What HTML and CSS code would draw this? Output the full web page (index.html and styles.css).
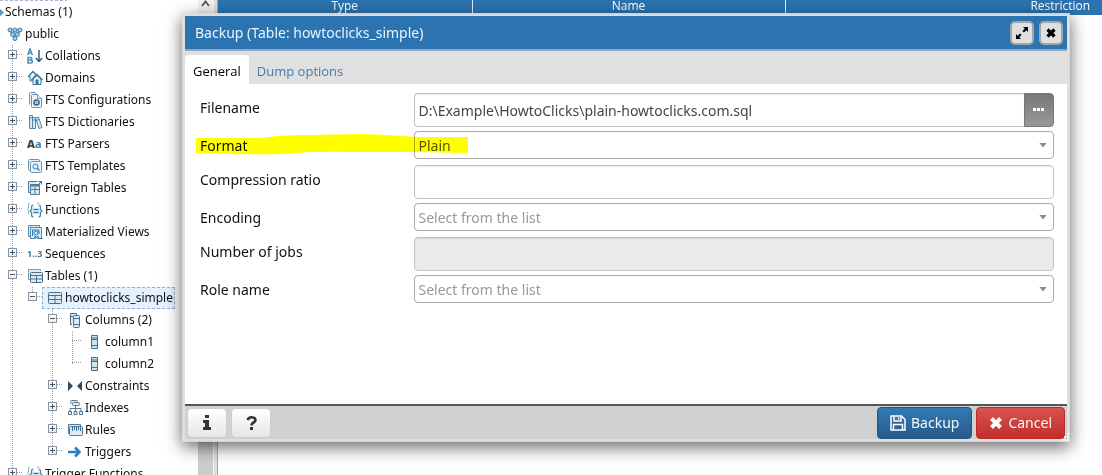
FILE: index.html
```html
<!DOCTYPE html>
<html lang="en">
<head>
<meta charset="utf-8">
<title>Backup (Table: howtoclicks_simple)</title>
<link rel="stylesheet" href="styles.css">
</head>
<body>
<svg class="sprite" aria-hidden="true">
  <symbol id="public" viewBox="0 0 16 16"><g fill="#a9d3ec" stroke="#3f7ca6" stroke-width="1"><path d="M3 5 8 12 13 5M5 3 8 6 11 3"/><circle cx="3" cy="4" r="2"/><circle cx="8" cy="4" r="2"/><circle cx="13" cy="4" r="2"/><circle cx="5.500" cy="8.500" r="2"/><circle cx="10.500" cy="8.500" r="2"/><circle cx="8" cy="12.500" r="2"/></g></symbol>
  <symbol id="collation" viewBox="0 0 16 16"><g fill="none" stroke="#4a8dbd" stroke-width="1.500"><path d="M.7 7 3 .8 5.300 7M1.500 5H4.500M1 9.500V15H3.500C6 15 6 12 3.500 12H1 3.200C5.500 12 5.300 9.500 3.200 9.500Z"/></g><path d="M12 2V13.500M8.800 10 12 13.500 15.200 10" fill="none" stroke="#34566f" stroke-width="1.400"/></symbol>
  <symbol id="domain" viewBox="0 0 16 16"><g fill="#e6f3fb" stroke="#3e7499"><path d="M3 6V11H8V5"/><path d="M1 7 6 1.500 11 6.500" fill="none" stroke-width="1.500"/><path d="M6 9V14.500H14V9L10 5.500Z"/><path d="M4.500 10 10 4.500 15.500 10" fill="none" stroke-width="1.500"/></g><path d="M8.500 9.500H11.500V14.500H8.500Z" fill="#2d79ae"/></symbol>
  <symbol id="config" viewBox="0 0 16 16"><g fill="#e8f3fa" stroke="#6e93ac"><path d="M2.500 12.500V1.500Q2.500.5 3.500.5H8L11 3.500"/><path d="M4.500 3.500Q4.500 2.500 5.500 2.500H10.500L14.500 6.500V14.500Q14.500 15.500 13.500 15.500H5.500Q4.500 15.500 4.500 14.500Z"/><path d="M10.500 2.500V6.500H14.500"/><circle cx="9.500" cy="10.500" r="2.500" stroke="#35607d" stroke-width="1.500"/><circle cx="9.500" cy="10.500" r=".7"/></g></symbol>
  <symbol id="dictionary" viewBox="0 0 16 16"><g fill="#d5eaf7" stroke="#5487a8"><path d="M2.500 1.500H5.500V14.500H2.500ZM5.500 3.500H8.500V14.500H5.500ZM8.500 4 11.500 3 15 13.500 12 14.500ZM2.500 4H5.500M5.500 6H8.500M9.200 6.500 12.200 5.500"/></g></symbol>
  <symbol id="template" viewBox="0 0 16 16"><g fill="#e8f3fa" stroke="#6e93ac"><path d="M3.500 12.500H2.500Q1.500 12.500 1.500 11.500V2.500Q1.500 1.500 2.500 1.500H11.500Q12.500 1.500 12.500 3"/><rect x="3.500" y="3.500" width="11" height="11" rx="1"/><circle cx="8.500" cy="8.500" r="2.500" stroke="#357eae"/><path d="M10.300 10.300 12.500 12.500" stroke="#357eae" stroke-width="1.500"/></g></symbol>
  <symbol id="foreign" viewBox="0 0 16 16"><g fill="#d7eaf6" stroke="#517d9b"><path d="M3 12.500H1.500V1.500H10M3.500 4.500H12.500V14.500H3.500Z"/><path d="M3.500 9.500H12.500M8 7V14.500"/><path d="M4 5.500H12" stroke-width="2"/><path d="M10.500 5.500 14 2M11.500 1.500H14.500V4.500" fill="none" stroke="#286a98"/></g></symbol>
  <symbol id="function" viewBox="0 0 16 16"><g fill="none" stroke="#4c87ad"><path d="M3 1Q1.500 1 1.500 3V6L.5 7.500 1.500 9V12M10 1Q12 1 12 2" stroke="#8cafc6"/><path d="M6.500 3Q4.500 3 4.500 5V7.500L3 9 4.500 10.500V13Q4.500 15 6.500 15M11.500 3Q13.500 3 13.500 5V7.500L15 9 13.500 10.500V13Q13.500 15 11.500 15" fill="#d8edf9" stroke-width="1.200"/><path d="M6.500 7.500H11.500M6.500 10.500H11.500" stroke="#287cb6" stroke-width="1.300"/></g></symbol>
  <symbol id="matview" viewBox="0 0 16 16"><g fill="#d8edf9" stroke="#578aac"><path d="M3 12.500H1.500V1.500H12.500V3"/><rect x="3.500" y="3.500" width="11" height="11"/><path d="M5.500 12V6H12V10" fill="none" stroke="#2d79ae"/><circle cx="9" cy="9" r="2" stroke="#2d79ae"/><path d="M8 15V12L9.500 13.500 11 12V15M12.500 14.500H15.500" stroke="#285f85"/></g></symbol>
  <symbol id="tables" viewBox="0 0 16 16"><g fill="#dcebf5" stroke="#486f89"><path d="M3 11.500H1.500V1.500H13.500V3" stroke="#7d9caf"/><rect x="3.500" y="4.500" width="12" height="10" rx="1"/><path d="M3.500 7.500H15.500M3.500 11H15.500M9.500 7.500V14.500"/></g></symbol>
  <symbol id="table" viewBox="0 0 16 16"><g fill="#dcebf5" stroke="#486f89"><rect x="1.500" y="2.500" width="13" height="11" rx="1"/><path d="M1.500 5.500H14.500M1.500 9.500H14.500M8 5.500V13.500"/></g></symbol>
  <symbol id="columns" viewBox="0 0 16 16"><g fill="#dcebf5" stroke="#486f89"><path d="M5 12.500H3.500V1.500H9.500V3M3.500 4.500H6"/><rect x="6.500" y="3.500" width="6" height="12" rx="1"/><path d="M6.500 6.500H12.500M6.500 12.500H12.500"/></g></symbol>
  <symbol id="column" viewBox="0 0 16 16"><g fill="#cfe4f2" stroke="#486f89"><path d="M4.500 1.500H10.500V14.500H4.500Z"/><path d="M4.500 5.500H10.500M4.500 11.500H10.500M5 4H10"/></g></symbol>
  <symbol id="constraint" viewBox="0 0 16 16"><path d="M1 3 6 8 1 13ZM15 3 10 8 15 13Z" fill="#34495a"/></symbol>
  <symbol id="index" viewBox="0 0 16 16"><g fill="#dcebf5" stroke="#587991"><rect x="3.500" y=".5" width="7" height="3" rx="1"/><rect x="5.500" y="2.500" width="7" height="3" rx="1"/><path d="M8.500 5.500V11M3 11V8.500H14V11" fill="none"/><path d="M1.500 11.500H4.500V14.500H1.500ZM7 11.500H10V14.500H7ZM12.500 11.500H15.500V14.500H12.500Z"/></g></symbol>
  <symbol id="rule" viewBox="0 0 16 16"><g fill="#dcecf7" stroke="#587991"><path d="M2.500 11.500H1.500V2.500H13.500V4"/><rect x="2.500" y="4.500" width="13" height="9" rx="1"/><path d="M5.500 5V9M7.500 5V8M9.500 5V9M11.500 5V8M13.500 5V9" stroke="#2f75a5"/></g></symbol>
  <symbol id="trigger" viewBox="0 0 16 16"><path d="M1 8H12M8 3.500 12.500 8 8 12.500" fill="none" stroke="#2c80bd" stroke-width="2.500"/></symbol>
</svg>

<main class="app">
  <nav class="tree" aria-label="Browser">
    <ul class="root">
      <li><div class="row schemas"><span class="diamond"></span>Schemas (1)</div></li>
      <li>
        <div class="row"><svg class="icon lead"><use href="#public"/></svg>public</div>
        <ul class="branch">
          <li><div class="row"><button class="toggle" aria-label="Expand"></button><svg class="icon"><use href="#collation"/></svg>Collations</div></li>
          <li><div class="row"><button class="toggle" aria-label="Expand"></button><svg class="icon"><use href="#domain"/></svg>Domains</div></li>
          <li><div class="row"><button class="toggle" aria-label="Expand"></button><svg class="icon"><use href="#config"/></svg>FTS Configurations</div></li>
          <li><div class="row"><button class="toggle" aria-label="Expand"></button><svg class="icon"><use href="#dictionary"/></svg>FTS Dictionaries</div></li>
          <li><div class="row"><button class="toggle" aria-label="Expand"></button><span class="icon glyph"><b>A</b>a</span>FTS Parsers</div></li>
          <li><div class="row"><button class="toggle" aria-label="Expand"></button><svg class="icon"><use href="#template"/></svg>FTS Templates</div></li>
          <li><div class="row"><button class="toggle" aria-label="Expand"></button><svg class="icon"><use href="#foreign"/></svg>Foreign Tables</div></li>
          <li><div class="row"><button class="toggle" aria-label="Expand"></button><svg class="icon"><use href="#function"/></svg>Functions</div></li>
          <li><div class="row"><button class="toggle" aria-label="Expand"></button><svg class="icon"><use href="#matview"/></svg>Materialized Views</div></li>
          <li><div class="row"><button class="toggle" aria-label="Expand"></button><span class="icon glyph digits">1..3</span>Sequences</div></li>
          <li>
            <div class="row"><button class="toggle open" aria-label="Collapse"></button><svg class="icon"><use href="#tables"/></svg>Tables (1)</div>
            <ul class="branch">
              <li>
                <div class="row"><button class="toggle open" aria-label="Collapse"></button><span class="selected"><svg class="icon"><use href="#table"/></svg>howtoclicks_simple</span></div>
                <ul class="branch">
                  <li>
                    <div class="row"><button class="toggle open" aria-label="Collapse"></button><svg class="icon"><use href="#columns"/></svg>Columns (2)</div>
                    <ul class="branch">
                      <li><div class="row"><span class="leaf"></span><svg class="icon"><use href="#column"/></svg>column1</div></li>
                      <li><div class="row"><span class="leaf"></span><svg class="icon"><use href="#column"/></svg>column2</div></li>
                    </ul>
                  </li>
                  <li><div class="row"><button class="toggle" aria-label="Expand"></button><svg class="icon"><use href="#constraint"/></svg>Constraints</div></li>
                  <li><div class="row"><button class="toggle" aria-label="Expand"></button><svg class="icon"><use href="#index"/></svg>Indexes</div></li>
                  <li><div class="row"><button class="toggle" aria-label="Expand"></button><svg class="icon"><use href="#rule"/></svg>Rules</div></li>
                  <li><div class="row"><button class="toggle" aria-label="Expand"></button><svg class="icon"><use href="#trigger"/></svg>Triggers</div></li>
                </ul>
              </li>
            </ul>
          </li>
          <li><div class="row"><button class="toggle" aria-label="Expand"></button><svg class="icon"><use href="#function"/></svg>Trigger Functions</div></li>
        </ul>
      </li>
    </ul>
  </nav>
  <div class="scrollbar"><svg class="scroll-up" viewBox="0 0 15 13"><path d="M4 6 7.500 1.500 11 6" fill="none" stroke="#555" stroke-width="1.800"/></svg></div>
  <div class="splitter"></div>
  <section class="content">
    <table class="grid">
      <thead><tr><th class="col-type">Type</th><th class="col-name">Name</th><th class="col-restriction">Restriction</th></tr></thead>
    </table>
  </section>
</main>

<div class="dialog" role="dialog" aria-labelledby="dialog-title">
  <header class="titlebar">
    <h1 class="title" id="dialog-title">Backup (Table: howtoclicks_simple)</h1>
    <button class="window-button" aria-label="Maximize"><svg width="14" height="14" viewBox="0 0 14 14"><path d="M8 1H13V6L11.300 4.300 9 6.600 7.400 5 9.700 2.700ZM6 13H1V8L2.700 9.700 5 7.400 6.600 9 4.300 11.300Z"/></svg></button>
    <button class="window-button" aria-label="Close"><svg width="12" height="12" viewBox="0 0 12 12"><path d="M2.500 2.500 9.500 9.500M9.500 2.500 2.500 9.500" stroke="#000" stroke-width="3.200"/></svg></button>
  </header>
  <div class="tabs" role="tablist">
    <button class="tab active" role="tab" aria-selected="true">General</button>
    <button class="tab" role="tab" aria-selected="false">Dump options</button>
  </div>
  <form class="form" id="backup">
    <label class="label" for="filename">Filename</label>
    <div class="file"><input class="field" id="filename" type="text" value="D:\Example\HowtoClicks\plain-howtoclicks.com.sql"><button class="browse" type="button" aria-label="Browse"><svg width="12" height="4" viewBox="0 0 12 4"><path d="M0 0H3V3H0ZM4 0H7V3H4ZM8 0H11V3H8Z" fill="#fff"/></svg></button></div>
    <label class="label short" for="format">Format</label>
    <div class="picker"><select class="field chosen" id="format"><option>Plain</option></select></div>
    <label class="label" for="ratio">Compression ratio</label>
    <input class="field" id="ratio" type="text">
    <label class="label short" for="encoding">Encoding</label>
    <div class="picker"><select class="field" id="encoding"><option>Select from the list</option></select></div>
    <label class="label" for="jobs">Number of jobs</label>
    <input class="field" id="jobs" type="text" disabled>
    <label class="label short" for="role">Role name</label>
    <div class="picker"><select class="field" id="role"><option>Select from the list</option></select></div>
    <svg class="marker" viewBox="0 0 272 22" aria-hidden="true"><path d="M0 4 64 4Q85 1 110 1L165 0Q195 1 220 3L272 3V19L218 18 160 18Q110 17 90 20 50 21 0 19Z" fill="#ff0"/></svg>
  </form>
  <footer class="footer">
    <button class="small" aria-label="Information"><svg width="8" height="15" viewBox="0 0 8 15"><path d="M2 0H6V3H2ZM0 5H6V12H8V15H0V12H2V8H0Z" fill="#333"/></svg></button>
    <button class="small" aria-label="Help"><svg width="11" height="14" viewBox="0 0 11 14"><path d="M1.500 4Q2.500 1.300 5.500 1.300C10 1.300 10.500 5 7.500 6.500Q5.500 7.500 5.500 9.500" fill="none" stroke="#333" stroke-width="2.600"/><path d="M4 11H7V14H4Z" fill="#333"/></svg></button>
    <button class="action primary" type="submit" form="backup"><svg width="16" height="16" viewBox="0 0 16 16"><path d="M1 1H11.500L15 4.500V15H1ZM4 1V6H11V1M8.500 2.500V4.500M3.500 15V9.500H12.500V15" fill="none" stroke="#fff" stroke-width="1.500"/></svg>Backup</button>
    <button class="action danger" type="button"><svg width="14" height="14" viewBox="0 0 14 14"><path d="M2.500 2.500 11.500 11.500M11.500 2.500 2.500 11.500" stroke="#fff" stroke-width="4"/></svg>Cancel</button>
  </footer>
  <svg class="grip" viewBox="0 0 8 8" aria-hidden="true"><path d="M6 0H8V2H6ZM3 3H5V5H3ZM6 3H8V5H6ZM0 6H2V8H0ZM3 6H5V8H3ZM6 6H8V8H6Z" fill="#f5f5f5"/></svg>
</div>
</body>
</html>
```

FILE: styles.css
```css
* { box-sizing: border-box; }
body {
  margin: 0;
  height: 100vh;
  overflow: hidden;
  background: #fff;
  color: #111;
  font: 12px/22px "Noto Sans", "Open Sans", sans-serif;
}
button, input, select { font: inherit; color: inherit; margin: 0; }
ul { list-style: none; margin: 0; padding: 0; }
.sprite { display: none; }

.app { display: flex; height: 100%; overflow: hidden; }
.tree { width: 198px; flex: none; overflow: hidden; white-space: nowrap; }
.root {
  padding: 1px 0 0 2px;
  background: repeating-linear-gradient(90deg, #a3b6cf 0 3px, transparent 3px 5px) 0 0 / 67px 1px no-repeat;
}
.row { display: flex; align-items: center; height: 22px; }
.schemas { padding-left: 3px; }
.diamond { width: 5px; height: 5px; margin: 0 2px 0 -7px; background: #5a9ccc; transform: rotate(45deg); }
.icon { width: 16px; height: 16px; margin: 0 2px 0 5px; flex: none; }
.glyph { font: bold 11px/16px "Open Sans", sans-serif; color: #3b7ba8; }
.glyph b { color: #34495a; }
.digits { font-size: 9px; }
.branch > li {
  background: repeating-linear-gradient(#999 0 1px, transparent 1px 2px) 10px 0 / 1px 100% no-repeat;
}
.branch > li:last-child { background-size: 1px 11px; }
.root > li > .branch > li:last-child { background-size: 1px 100%; }
.branch .branch { margin-left: 20px; }
.toggle, .leaf { width: 20px; height: 20px; flex: none; padding: 0; border: 0; }
.toggle {
  background:
    linear-gradient(#456, #456) 8px 8px / 5px 1px no-repeat,
    linear-gradient(#456, #456) 10px 6px / 1px 5px no-repeat,
    linear-gradient(#fff, #eee) 7px 5px / 7px 7px no-repeat,
    linear-gradient(#8a94a0, #8a94a0) 6px 4px / 9px 9px no-repeat,
    repeating-linear-gradient(90deg, #999 0 1px, transparent 1px 2px) 15px 8px / 5px 1px no-repeat;
}
.toggle.open {
  background:
    linear-gradient(#456, #456) 8px 8px / 5px 1px no-repeat,
    linear-gradient(#fff, #eee) 7px 5px / 7px 7px no-repeat,
    linear-gradient(#8a94a0, #8a94a0) 6px 4px / 9px 9px no-repeat,
    repeating-linear-gradient(90deg, #999 0 1px, transparent 1px 2px) 15px 8px / 5px 1px no-repeat;
}
.leaf { background: repeating-linear-gradient(90deg, #999 0 1px, transparent 1px 2px) 10px 8px / 10px 1px no-repeat; }
.selected { display: flex; align-items: center; height: 22px; padding-right: 2px; background: #e5f1fc; outline: 1px dashed #92b1cf; outline-offset: -1px; }

.scrollbar { width: 15px; flex: none; background: linear-gradient(#f0f0f0 0 13px, #cdcdcd 13px); }
.scroll-up { display: block; width: 15px; height: 13px; }
.splitter { width: 5px; flex: none; background: #ddd; border-left: 1px solid #f4f4f4; border-right: 1px solid #aaa; }
.content { flex: 1; min-width: 0; overflow: hidden; }
.grid { width: 1118px; table-layout: fixed; border-collapse: collapse; background: #2b74b1; color: #fff; font-family: "Open Sans", sans-serif; }
.grid th { height: 15px; padding: 0 0 3px; border-right: 1px solid #e4eef6; font-weight: 400; line-height: 12px; }
.col-type { width: 254px; }
.col-name { width: 313px; }

.dialog {
  position: absolute;
  inset: 13px 32px 33px 182px;
  display: flex;
  flex-direction: column;
  border: 3px solid rgba(221, 221, 221, .92);
  background: #fff;
  background-clip: padding-box;
  box-shadow: 0 5px 16px rgba(0, 0, 0, .6);
  font-size: 14px;
}
.titlebar { display: flex; align-items: center; gap: 5px; height: 35px; flex: none; padding: 0 4px 0 10px; background: #2b74b1; border-bottom: 2px solid #91a9bb; }
.title { flex: 1; margin: 0; color: #e9f3fb; font-size: 14px; font-weight: 400; }
.window-button { display: grid; place-items: center; width: 24px; height: 24px; padding: 0; background: #e0e0e0; border: 2px solid #a0a6aa; border-radius: 5px; }
.tabs { display: flex; height: 33px; flex: none; padding-top: 4px; background: #e0e0e0; font-family: "Open Sans", sans-serif; font-size: 13px; }
.tab { padding: 2px 8px 0; border: 0; background: none; color: #447cae; }
.tab.active { background: #fff; color: #000; border-radius: 4px 4px 0 0; }

.form { position: relative; flex: 1; display: grid; grid-template-columns: 1fr 3fr; grid-auto-rows: max-content; padding: 9px 13px 0 15px; }
.label { height: 38px; line-height: 30px; }
.label.short { height: 34px; line-height: 30px; }
.field { display: block; width: 100%; height: 34px; padding: 0 4px; border: 1px solid #c4c4c4; border-radius: 4px; background: #fff; color: #444; box-shadow: inset 0 1px 1px rgba(0, 0, 0, .08); }
.field:disabled { background: #ebebeb; }
.file { display: flex; height: 34px; }
.file .field { flex: 1; min-width: 0; border-radius: 4px 0 0 4px; border-right: 0; }
.browse { width: 30px; padding: 0; border: 1px solid #777; border-radius: 0 4px 4px 0; background: linear-gradient(#777, #999); }
.browse svg { display: block; margin: 0 auto; }
.picker { display: grid; height: 28px; align-items: center; }
.picker::after { content: ""; grid-area: 1 / 1; justify-self: end; width: 8px; height: 5px; margin-right: 7px; background: #888; clip-path: polygon(0 0, 100% 0, 50% 100%); pointer-events: none; }
.picker .field { grid-area: 1 / 1; height: 28px; padding-top: 1px; appearance: none; border-color: #aaa; color: #999; box-shadow: none; }
.picker .chosen { color: #555; }
.marker { position: absolute; left: 11px; top: 50px; width: 272px; height: 22px; mix-blend-mode: multiply; pointer-events: none; }

.footer { display: flex; align-items: center; gap: 6px; height: 35px; flex: none; padding: 0 2px 0 3px; background: #d1d1d1; border-top: 2px solid #555753; }
.small { display: grid; place-items: center; width: 38px; height: 28px; padding: 0; border: 0; border-radius: 4px; background: linear-gradient(#fff, #e6e6e6); box-shadow: 0 0 1px #bbb; }
.action { display: flex; align-items: center; gap: 5px; height: 32px; padding: 0 12px; border-radius: 4px; color: #f4f8fb; }
.primary { margin-left: auto; background: linear-gradient(#337ab7, #265a88); border: 1px solid #245580; }
.danger { margin-left: -2px; background: linear-gradient(#d9534f, #c12e2a); border: 1px solid #b92c28; }
.grip { position: absolute; right: -2px; bottom: -2px; width: 8px; height: 8px; }
```
